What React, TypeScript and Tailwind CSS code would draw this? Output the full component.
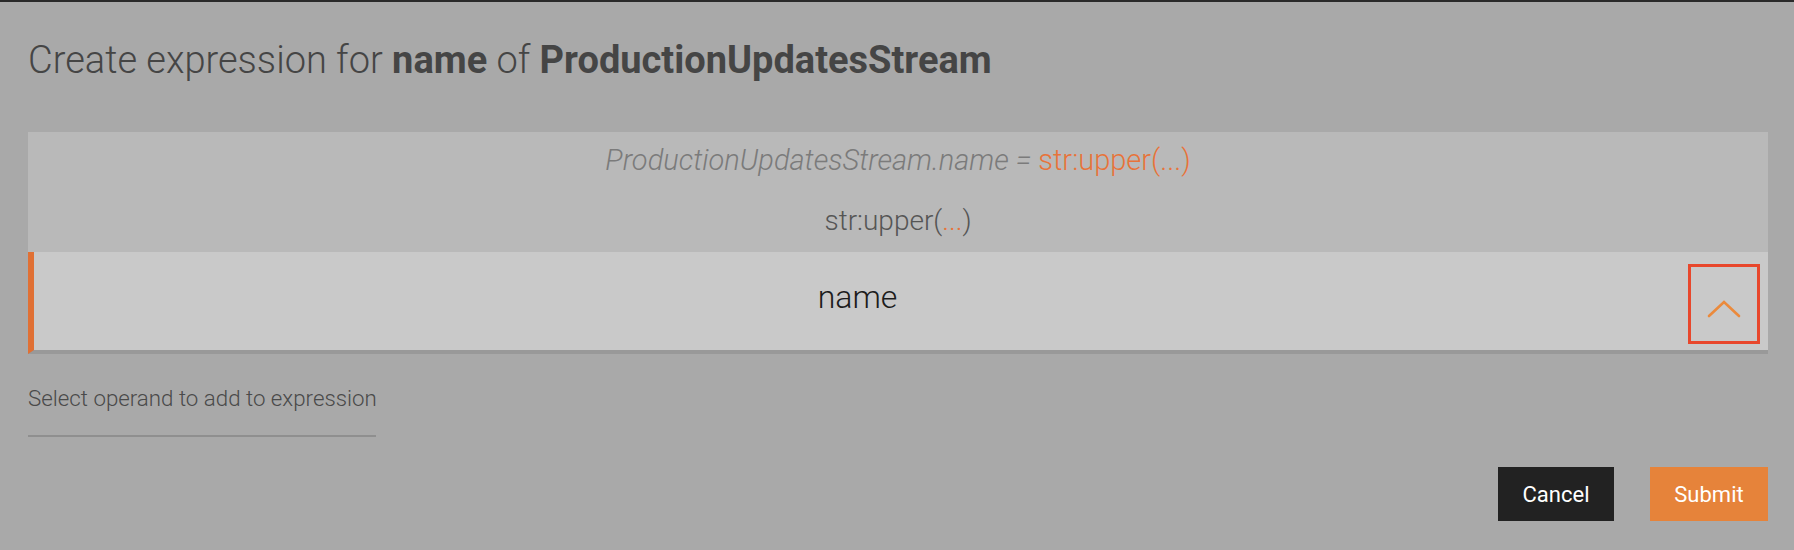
import React from "react"

const font = { fontFamily: "Roboto, 'Noto Sans', sans-serif" }

function ChevronBox() {
  return (
    <button className="mt-[12px] ml-[7px] mr-[8px] flex h-[80px] w-[72px] shrink-0 self-start items-start justify-center border-[3px] border-[#e8472c] pt-[33px]">
      <svg width="34" height="18" viewBox="0 0 34 18" fill="none">
        <polyline
          points="2,16 17,2 32,16"
          stroke="#eb8a3c"
          strokeWidth="2.6"
          strokeLinecap="round"
          strokeLinejoin="miter"
        />
      </svg>
    </button>
  )
}

export default function App() {
  return (
    <div
      className="min-h-[550px] w-full border-t-2 border-[#2a2a2a] bg-[#a9a9a9] pl-[28px] pr-[26px]"
      style={font}
    >
      <h1 className="pt-[36px] text-[38px] leading-[44px] font-light text-[#454545]">
        Create expression for <span className="font-bold">name</span> of{" "}
        <span className="font-bold">ProductionUpdatesStream</span>
      </h1>

      <div className="mt-[50px]">
        <div className="flex h-[120px] flex-col items-center bg-[#b9b9b9] pt-[12px]">
          <p className="text-[29px] leading-[33px] font-light text-[#7b7b7b]">
            <span className="italic">ProductionUpdatesStream.name = </span>
            <span className="text-[#e8733a]">str:upper(...)</span>
          </p>
          <p className="mt-[27px] text-[28px] leading-[33px] font-light text-[#555]">
            str:upper(<span className="text-[#e8733a]">...</span>)
          </p>
        </div>
        <div className="flex h-[102px] border-b-4 border-l-[6px] border-b-[#999] border-l-[#e07034] bg-[#c9c9c9]">
          <div className="flex flex-1 items-center justify-center pb-[8px] text-[32px] font-light text-[#1c1c1c]">
            name
          </div>
          <ChevronBox />
        </div>
      </div>

      <div className="mt-[28px] w-[348px]">
        <p className="whitespace-nowrap text-[22.3px] font-light text-[#4a4a4a]">
          Select operand to add to expression
        </p>
        <div className="mt-[20px] h-[2px] bg-[#8f8f8f]" />
      </div>

      <div className="mt-[30px] flex justify-end gap-[36px]">
        <button className="h-[54px] w-[116px] bg-[#222] text-[22px] font-normal text-white">Cancel</button>
        <button className="h-[54px] w-[118px] bg-[#e6833a] text-[22px] font-normal text-white">Submit</button>
      </div>
    </div>
  )
}
